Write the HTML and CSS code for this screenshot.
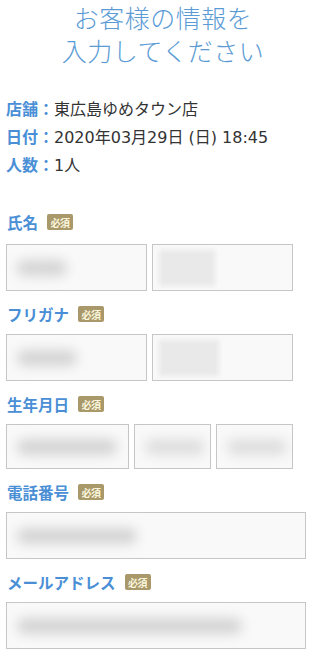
FILE: index.html
```html
<!DOCTYPE html>
<html lang="ja">
<head>
<meta charset="utf-8">
<link rel="stylesheet" href="styles.css">
</head>
<body>
<div class="page">
  <h1 class="title">お客様の情報を<br>入力してください</h1>
  <dl class="info">
    <div class="info-row"><dt>店舗：</dt><dd>東広島ゆめタウン店</dd></div>
    <div class="info-row"><dt>日付：</dt><dd>2020年03月29日 (日) 18:45</dd></div>
    <div class="info-row"><dt>人数：</dt><dd>1人</dd></div>
  </dl>

  <div class="field first">
    <div class="label">氏名<span class="req">必須</span></div>
    <div class="inputs">
      <div class="box w141"><span class="blur b-dark" style="width:50px"></span></div>
      <div class="box w141"><span class="blur b-block" style="width:56px"></span></div>
    </div>
  </div>

  <div class="field">
    <div class="label">フリガナ<span class="req">必須</span></div>
    <div class="inputs">
      <div class="box w141"><span class="blur b-dark" style="width:60px"></span></div>
      <div class="box w141"><span class="blur b-block" style="width:60px"></span></div>
    </div>
  </div>

  <div class="field">
    <div class="label">生年月日<span class="req">必須</span></div>
    <div class="inputs short">
      <div class="box w123"><span class="blur b-dark" style="width:100px"></span></div>
      <div class="box w77"><span class="blur b-light" style="width:60px"></span></div>
      <div class="box w77"><span class="blur b-light" style="width:60px"></span></div>
    </div>
  </div>

  <div class="field">
    <div class="label">電話番号<span class="req">必須</span></div>
    <div class="inputs">
      <div class="box full"><span class="blur b-dark" style="width:120px"></span></div>
    </div>
  </div>

  <div class="field">
    <div class="label">メールアドレス<span class="req">必須</span></div>
    <div class="inputs">
      <div class="box full"><span class="blur b-dark" style="width:225px"></span></div>
    </div>
  </div>
</div>
</body>
</html>
```

FILE: styles.css
```css
html, body {
  margin: 0;
  padding: 0;
  background: #ffffff;
}
body {
  font-family: "Noto Sans CJK JP", "Noto Sans", sans-serif;
  color: #333333;
  overflow: hidden;
}
.page {
  width: 300px;
  margin-left: 6px;
}
.title {
  margin: 0;
  padding: 1px 0 0 14px;
  font-weight: 300;
  font-size: 25px;
  line-height: 33px;
  color: #5b9bd5;
  text-align: center;
  letter-spacing: 0.5px;
}
.info {
  margin: 27px 0 0 0;
}
.info-row {
  display: flex;
  height: 28px;
  align-items: center;
  font-size: 16px;
}
.info dt {
  flex: none;
  white-space: nowrap;
  font-weight: 700;
  color: #4a8fd6;
  width: 48px;
}
.info dd {
  margin: 0;
  white-space: nowrap;
  color: #333333;
  font-family: "DejaVu Sans", "Noto Sans CJK JP", sans-serif;
}
.field {
  margin-top: 11px;
}
.field.first {
  margin-top: 32px;
}
.label {
  display: flex;
  align-items: center;
  height: 24px;
  font-size: 15.5px;
  font-weight: 700;
  color: #4a8fd6;
  padding-left: 1px;
  margin-bottom: 8px;
}
.field.first .label {
  margin-bottom: 10px;
}
.req {
  display: inline-flex;
  align-items: center;
  justify-content: center;
  width: 26px;
  height: 16px;
  margin-left: 9px;
  background: #a8986a;
  color: #fbf6dc;
  font-size: 10px;
  font-weight: 700;
  border-radius: 2px;
  letter-spacing: -0.5px;
}
.inputs {
  display: flex;
  gap: 5px;
}
.box {
  box-sizing: border-box;
  height: 47px;
  border: 1px solid #c6c6c6;
  background: #f9f9f9;
  display: flex;
  align-items: center;
  padding-left: 10px;
  overflow: hidden;
}
.short .box {
  height: 45px;
}
.w141 { width: 141px; }
.w123 { width: 123px; }
.w77 { width: 77px; }
.full { width: 300px; }
.blur {
  display: block;
  height: 16px;
  border-radius: 8px;
  filter: blur(6px);
}
.b-dark { background: #d4d4d4; }
.b-light { background: #dedede; }
.b-block {
  height: 36px;
  border-radius: 0;
  background: #e9e9e9;
  filter: blur(2px);
  margin-left: -4px;
}
```
